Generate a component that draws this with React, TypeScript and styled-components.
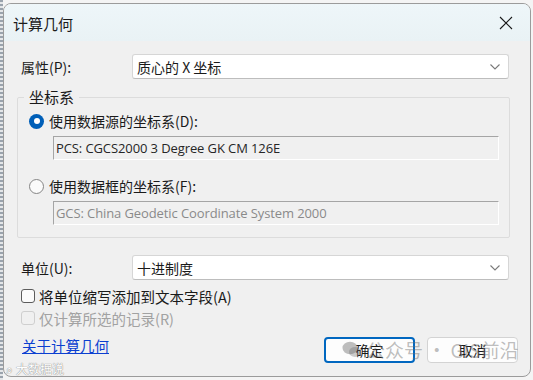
import React from 'react';
import styled, { createGlobalStyle } from 'styled-components';

const GlobalStyle = createGlobalStyle`
  html, body {
    margin: 0;
    padding: 0;
    background: #dcdcdc;
  }
  body {
    font-family: "Noto Sans CJK SC", "Noto Sans", sans-serif;
    color: #1a1a1a;
  }
`;

const Page = styled.div`
  width: 533px;
  height: 380px;
  padding: 3px 2px 0 3px;
  box-sizing: border-box;
  background: repeating-linear-gradient(180deg, #9aa3ad 0 2px, #e4e6e8 2px 4px) left / 3px 100% no-repeat, #f4f4f4;
  position: relative;
  overflow: hidden;
`;

const Window = styled.div`
  width: 528px;
  height: 374px;
  background: #f0f0f0;
  border: 1px solid #9b9b9b;
  border-radius: 8px;
  box-sizing: border-box;
  overflow: hidden;
  display: flex;
  flex-direction: column;
`;

const TitleBar = styled.div`
  height: 37px;
  flex: none;
  display: flex;
  align-items: center;
  justify-content: space-between;
  padding: 0 16px 0 9px;
  background: linear-gradient(180deg, #eef6f9, #e9f2f5);
`;

const Title = styled.span`
  font-size: 15px;
  color: #1b1b1b;
  margin-top: 2px;
`;

const CloseButton = styled.div`
  width: 16px;
  height: 16px;
  display: flex;
  align-items: center;
  justify-content: center;
`;

const Body = styled.div`
  flex: 1;
  display: flex;
  flex-direction: column;
  padding: 13px 21px 0 16px;
  position: relative;
`;

const FieldRow = styled.div`
  display: grid;
  grid-template-columns: 112px 1fr;
  align-items: center;
`;

const Label = styled.span`
  font-size: 14px;
  padding-left: 1px;
`;

const Combo = styled.div`
  height: 25px;
  box-sizing: border-box;
  background: #ffffff;
  border: 1px solid #d6d6d6;
  border-bottom-color: #bdbdbd;
  border-radius: 3px;
  display: flex;
  align-items: center;
  justify-content: space-between;
  padding: 0 7px 0 4px;
  font-size: 14px;
`;

const Group = styled.fieldset`
  margin: 9px 0 0 -3px;
  padding: 0 10px 11px 10px;
  border: 1px solid #dcdcdc;
  border-radius: 2px;
  height: 150px;
  box-sizing: border-box;
  display: flex;
  flex-direction: column;
`;

const Legend = styled.legend`
  font-size: 15px;
  padding: 0 5px;
  margin-left: -4px;
  line-height: 18px;
`;

const OptionRow = styled.label`
  display: flex;
  align-items: center;
  gap: 5px;
  font-size: 14px;
  height: 20px;
`;

const Radio = styled.span<{ checked?: boolean }>`
  width: 15px;
  height: 15px;
  border-radius: 50%;
  box-sizing: border-box;
  margin-left: 1px;
  background: ${p => (p.checked ? '#005fb8' : '#fbfbfb')};
  border: ${p => (p.checked ? 'none' : '1px solid #858585')};
  display: flex;
  align-items: center;
  justify-content: center;
  &::after {
    content: '';
    display: ${p => (p.checked ? 'block' : 'none')};
    width: 6px;
    height: 6px;
    border-radius: 50%;
    background: #ffffff;
  }
`;

const ReadonlyBox = styled.div<{ muted?: boolean }>`
  margin: 5px 0 0 25px;
  width: 446px;
  height: 24px;
  box-sizing: border-box;
  border: 1px solid;
  border-color: #a5a5a5 #ffffff #ffffff #a5a5a5;
  background: #f0f0f0;
  display: flex;
  align-items: center;
  padding-left: 2px;
  font-family: "Open Sans", "Noto Sans", sans-serif;
  font-size: 13px;
  color: ${p => (p.muted ? '#8a8a8a' : '#262626')};
  letter-spacing: -0.1px;
`;

const CheckRow = styled.label<{ disabled?: boolean }>`
  display: flex;
  align-items: center;
  gap: 4px;
  font-size: 14.5px;
  height: 22px;
  color: ${p => (p.disabled ? '#a2a2a2' : '#1a1a1a')};
`;

const Check = styled.span<{ disabled?: boolean }>`
  width: 14px;
  height: 14px;
  box-sizing: border-box;
  border-radius: 3px;
  margin-left: 1px;
  border: 1px solid ${p => (p.disabled ? '#cfcfcf' : '#5c5c5c')};
  background: ${p => (p.disabled ? '#f0f0f0' : '#fbfbfb')};
`;

const Footer = styled.div`
  display: flex;
  align-items: center;
  justify-content: space-between;
  margin-top: 8px;
  margin-right: -9px;
`;

const HelpLink = styled.a`
  font-size: 14.5px;
  color: #0b3fd0;
  text-decoration: underline;
  margin-top: -10px;
  margin-left: 2px;
`;

const Buttons = styled.div`
  display: flex;
  gap: 12px;
`;

const Button = styled.button<{ primary?: boolean }>`
  width: 91px;
  height: 26px;
  box-sizing: border-box;
  border-radius: 4px;
  background: #fdfdfd;
  border: ${p => (p.primary ? '2px solid #0067c0' : '1px solid #d3d3d3')};
  font-family: "Noto Sans CJK SC", sans-serif;
  font-size: 14px;
  color: #1a1a1a;
  padding: 0;
`;

const Watermark = styled.div`
  position: absolute;
  left: 342px;
  top: 336px;
  display: flex;
  align-items: center;
  gap: 4px;
  font-size: 19px;
  color: rgba(110, 110, 110, 0.45);
  pointer-events: none;
  white-space: nowrap;
`;

const CornerMark = styled.div`
  position: absolute;
  left: 6px;
  top: 360px;
  font-size: 12px;
  color: #ffffff;
  text-shadow: 0 0 1px #8c8c8c, 0 0 1px #8c8c8c;
  pointer-events: none;
  display: flex;
  align-items: center;
  gap: 3px;
`;

const Chevron = () => (
  <svg width="12" height="8" viewBox="0 0 12 8">
    <path d="M1.5 1.5 L6 6 L10.5 1.5" fill="none" stroke="#7a7a7a" strokeWidth="1.1" />
  </svg>
);

export default function App() {
  return (
    <Page>
      <GlobalStyle />
      <Window>
        <TitleBar>
          <Title>计算几何</Title>
          <CloseButton>
            <svg width="14" height="14" viewBox="0 0 14 14">
              <path d="M1 1 L13 13 M13 1 L1 13" stroke="#1a1a1a" strokeWidth="1.1" />
            </svg>
          </CloseButton>
        </TitleBar>
        <Body>
          <FieldRow>
            <Label>属性(P):</Label>
            <Combo>
              <span>质心的 X 坐标</span>
              <Chevron />
            </Combo>
          </FieldRow>

          <Group>
            <Legend>坐标系</Legend>
            <OptionRow style={{ marginTop: 5 }}>
              <Radio checked />
              使用数据源的坐标系(D):
            </OptionRow>
            <ReadonlyBox>PCS: CGCS2000 3 Degree GK CM 126E</ReadonlyBox>
            <OptionRow style={{ marginTop: 16 }}>
              <Radio />
              使用数据框的坐标系(F):
            </OptionRow>
            <ReadonlyBox muted>GCS: China Geodetic Coordinate System 2000</ReadonlyBox>
          </Group>

          <FieldRow style={{ marginTop: 17 }}>
            <Label>单位(U):</Label>
            <Combo>
              <span>十进制度</span>
              <Chevron />
            </Combo>
          </FieldRow>

          <CheckRow style={{ marginTop: 5 }}>
            <Check />
            将单位缩写添加到文本字段(A)
          </CheckRow>
          <CheckRow disabled>
            <Check disabled />
            仅计算所选的记录(R)
          </CheckRow>

          <Footer>
            <HelpLink href="#">关于计算几何</HelpLink>
            <Buttons>
              <Button primary>确定</Button>
              <Button>取消</Button>
            </Buttons>
          </Footer>
        </Body>
      </Window>
      <Watermark>
        <svg width="20" height="18" viewBox="0 0 20 18">
          <ellipse cx="8" cy="7" rx="7.5" ry="6.2" fill="rgba(110,110,110,0.45)" />
          <ellipse cx="13" cy="11" rx="6" ry="5" fill="rgba(110,110,110,0.35)" />
        </svg>
        <span>公众号 · GIS前沿</span>
      </Watermark>
      <CornerMark>
        <span>⌕</span>
        <span>大数据说</span>
      </CornerMark>
    </Page>
  );
}
